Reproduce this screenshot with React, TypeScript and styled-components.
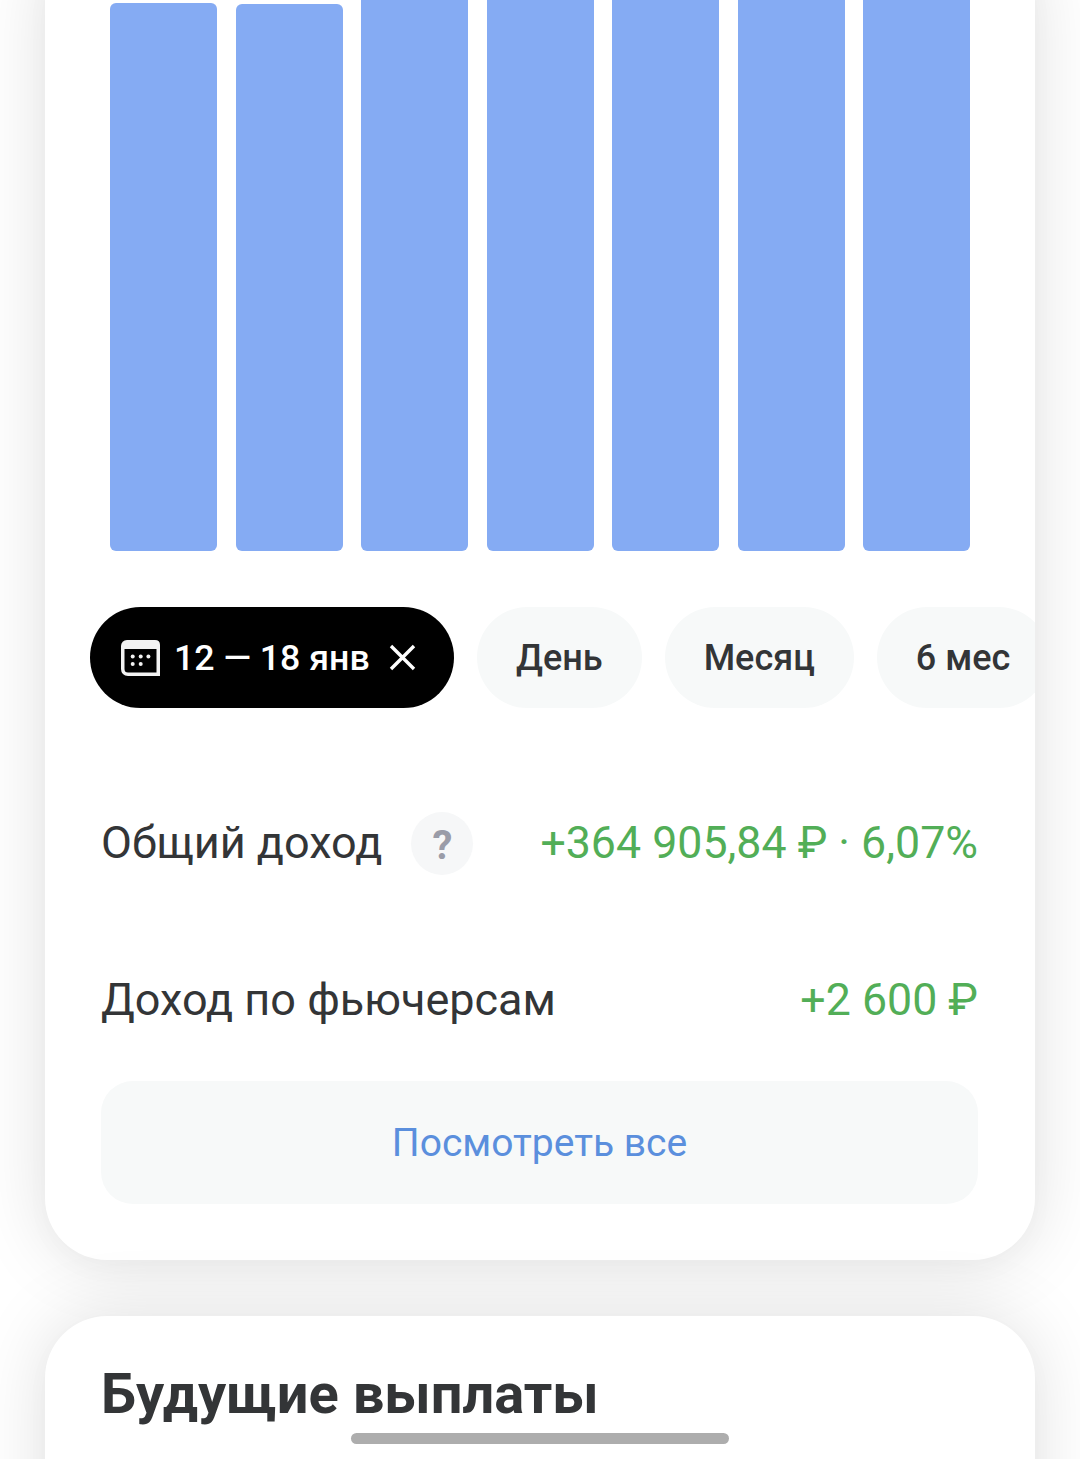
import styled, { createGlobalStyle } from "styled-components";

const GlobalStyle = createGlobalStyle`
    html, body {
        margin: 0;
        padding: 0;
        background: #fff;
        font-family: Roboto, "Liberation Sans", sans-serif;
    }
`;

const Page = styled.div`
    position: relative;
    width: 1080px;
    height: 1459px;
    overflow: hidden;
    display: flex;
    flex-direction: column;
    gap: 56px;
    align-items: center;
`;

const Card = styled.section`
    width: 990px;
    flex-shrink: 0;
    box-sizing: border-box;
    background: #fff;
    border-radius: 62px;
    box-shadow: 0 0 72px rgba(0, 0, 0, 0.125), 0 10px 30px rgba(0, 0, 0, 0.02);
    overflow: hidden;
`;

const IncomeCard = styled(Card)`
    margin-top: -60px;
    padding-bottom: 56px;
`;

const Chart = styled.div`
    height: 611px;
    padding: 0 65px;
    box-sizing: border-box;
    display: flex;
    align-items: flex-end;
    justify-content: space-between;
`;

const Bar = styled.div<{ $height: number }>`
    width: 107px;
    height: ${(p) => p.$height}px;
    background: #85abf3;
    border-radius: 6px;
`;

const Chips = styled.div`
    display: flex;
    gap: 23px;
    margin-top: 56px;
    padding-left: 45px;
`;

const Chip = styled.div<{ $active?: boolean }>`
    flex-shrink: 0;
    height: 101px;
    box-sizing: border-box;
    padding: 0 39px;
    border-radius: 51px;
    display: flex;
    align-items: center;
    font-size: 36px;
    font-weight: 500;
    color: ${(p) => (p.$active ? "#fff" : "#333537")};
    background: ${(p) => (p.$active ? "#000" : "#f7f9f9")};
`;

const ActiveChip = styled(Chip)`
    width: 364px;
    padding: 0 38px 0 31px;
    gap: 14px;
    font-size: 35.7px;
`;

const ChipLabel = styled.span`
    flex: 1;
    white-space: nowrap;
`;

const Rows = styled.div`
    padding: 0 57px 0 56px;
    margin-top: 56px;
`;

const Row = styled.div`
    height: 157px;
    box-sizing: border-box;
    display: flex;
    align-items: center;
    justify-content: space-between;
    font-size: 45px;
    color: #333537;
    &:last-child {
        height: 160px;
        padding-bottom: 3px;
    }
`;

const Label = styled.div`
    display: flex;
    align-items: center;
    gap: 29px;
`;

const HelpBadge = styled.span`
    width: 62px;
    height: 63px;
    margin-top: 2px;
    padding-top: 3px;
    box-sizing: border-box;
    border-radius: 50%;
    background: #f6f7f8;
    color: #9a9ca8;
    font-size: 40px;
    font-weight: 700;
    display: flex;
    align-items: center;
    justify-content: center;
`;

const Amount = styled.span`
    color: #52ae57;
    font-size: 44.7px;
`;

const ViewAll = styled.div`
    margin: 0 57px 0 56px;
    height: 123px;
    border-radius: 32px;
    background: #f7f9f9;
    color: #5b8fdd;
    font-size: 39px;
    display: flex;
    align-items: center;
    justify-content: center;
`;

const PayoutsCard = styled(Card)`
    padding: 46px 56px 0;
    height: 300px;
`;

const Title = styled.h2`
    margin: 0;
    font-size: 56px;
    font-weight: 700;
    line-height: 64px;
    color: #333537;
`;

const HomeIndicator = styled.div`
    position: absolute;
    left: 351px;
    top: 1433px;
    width: 378px;
    height: 11px;
    border-radius: 6px;
    background: #adadad;
`;

const CalendarIcon = () => (
    <svg width="39" height="36" viewBox="0 0 39 36" fill="none">
        <path
            d="M6 1.75H34C36.5 1.75 37.25 3 37.25 5V34.25H7C3.8 34.25 1.75 32.2 1.75 29V6C1.75 3.5 3.5 1.75 6 1.75Z"
            stroke="#f2f2f2"
            strokeWidth="3.5"
        />
        <rect x="2" y="2" width="35" height="7" fill="#f2f2f2" />
        <circle cx="11.7" cy="16.5" r="2" fill="#f2f2f2" />
        <circle cx="19.7" cy="16.5" r="2" fill="#f2f2f2" />
        <circle cx="27.4" cy="16.5" r="2" fill="#f2f2f2" />
        <circle cx="11.7" cy="24" r="2" fill="#f2f2f2" />
        <circle cx="19.7" cy="24" r="2" fill="#f2f2f2" />
    </svg>
);

const CloseIcon = () => (
    <svg width="27" height="27" viewBox="0 0 27 27" fill="none">
        <path d="M2 2L25 25M25 2L2 25" stroke="#fff" strokeWidth="3.4" />
    </svg>
);

const barHeights = [548, 547, 600, 600, 600, 600, 600];

const App = () => {
    return (
        <Page>
            <GlobalStyle />
            <IncomeCard>
                <Chart>
                    {barHeights.map((height, i) => (
                        <Bar key={i} $height={height} />
                    ))}
                </Chart>
                <Chips>
                    <ActiveChip $active>
                        <CalendarIcon />
                        <ChipLabel>12 — 18 янв</ChipLabel>
                        <CloseIcon />
                    </ActiveChip>
                    <Chip>День</Chip>
                    <Chip>Месяц</Chip>
                    <Chip>6 мес</Chip>
                </Chips>
                <Rows>
                    <Row>
                        <Label>
                            Общий доход
                            <HelpBadge>?</HelpBadge>
                        </Label>
                        <Amount>+364 905,84 ₽ · 6,07%</Amount>
                    </Row>
                    <Row>
                        <Label>Доход по фьючерсам</Label>
                        <Amount>+2 600 ₽</Amount>
                    </Row>
                </Rows>
                <ViewAll>Посмотреть все</ViewAll>
            </IncomeCard>
            <PayoutsCard>
                <Title>Будущие выплаты</Title>
            </PayoutsCard>
            <HomeIndicator />
        </Page>
    );
};

export default App;
